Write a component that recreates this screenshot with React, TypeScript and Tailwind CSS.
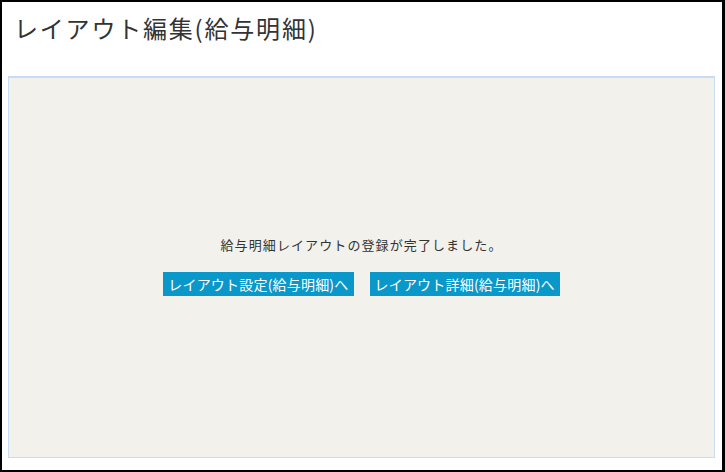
const font = { fontFamily: '"Noto Sans CJK JP", "Noto Sans", sans-serif' };

const LinkButton = ({ label }: { label: string }) => (
  <button
    type="button"
    className="h-6 px-[5px] bg-[#0a97c9] text-white text-[14px] leading-6 tracking-[0.2px] hover:opacity-90"
  >
    {label}
  </button>
);

const App = () => {
  return (
    <div
      style={font}
      className="w-[725px] h-[472px] bg-white border-black border-t-2 border-l-2 border-b-2 border-r-[3px] flex flex-col"
    >
      <h1 className="h-[74px] pl-[12px] pt-[10px] text-[24px] leading-8 text-[#333] font-normal tracking-[1.8px]">
        レイアウト編集(給与明細)
      </h1>

      <div className="ml-[6px] mr-[7px] mb-[12px] flex-1 bg-[#f2f1ec] border border-t-2 border-[#c8dcf3] flex flex-col items-center justify-center">
        <p className="text-[13px] leading-5 text-[#333] tracking-[1.1px] mt-[-5px]">
          給与明細レイアウトの登録が完了しました。
        </p>
        <div className="mt-[17px] flex gap-4">
          <LinkButton label="レイアウト設定(給与明細)へ" />
          <LinkButton label="レイアウト詳細(給与明細)へ" />
        </div>
      </div>
    </div>
  );
};

export default App;
